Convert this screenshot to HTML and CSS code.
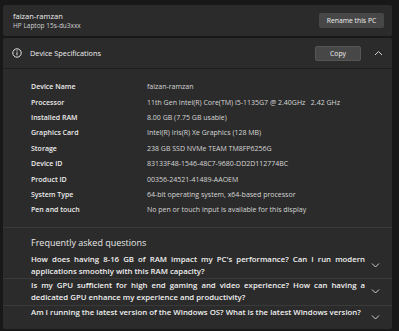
FILE: index.html
```html
<!DOCTYPE html>
<html lang="en">

<head>
    <meta charset="UTF-8">
    <meta name="viewport" content="width=device-width, initial-scale=1.0">
    <title>About</title>
    <link rel="stylesheet" href="styles.css">
</head>

<body>
    <div class="page">
        <div class="card pc-card">
            <div class="pc-info">
                <div class="pc-name">faizan-ramzan</div>
                <div class="pc-model">HP Laptop 15s-du3xxx</div>
            </div>
            <button class="btn btn-rename">Rename this PC</button>
        </div>

        <div class="card spec-card">
            <div class="spec-head">
                <svg class="info-icon" width="10" height="10" viewBox="0 0 10 10">
                    <circle cx="5" cy="5" r="4.2" fill="none" stroke="#e6e6e6" stroke-width="1"/>
                    <line x1="5" y1="4.3" x2="5" y2="7.3" stroke="#e6e6e6" stroke-width="1"/>
                    <circle cx="5" cy="2.9" r="0.6" fill="#e6e6e6"/>
                </svg>
                <span class="spec-title">Device Specifications</span>
                <button class="btn btn-copy">Copy</button>
                <svg class="chev" width="9" height="6" viewBox="0 0 9 6">
                    <polyline points="1,5 4.5,1.5 8,5" fill="none" stroke="#cfcfcf" stroke-width="1"/>
                </svg>
            </div>

            <div class="spec-list">
                <div class="spec-label">Device Name</div>
                <div class="spec-value">faizan-ramzan</div>
                <div class="spec-label">Processor</div>
                <div class="spec-value">11th Gen Intel(R) Core(TM) i5-1135G7 @ 2.40GHz &nbsp; 2.42 GHz</div>
                <div class="spec-label">Installed RAM</div>
                <div class="spec-value">8.00 GB (7.75 GB usable)</div>
                <div class="spec-label">Graphics Card</div>
                <div class="spec-value">Intel(R) Iris(R) Xe Graphics (128 MB)</div>
                <div class="spec-label">Storage</div>
                <div class="spec-value">238 GB SSD NVMe TEAM TM8FP6256G</div>
                <div class="spec-label">Device ID</div>
                <div class="spec-value">83133F48-1546-48C7-9680-DD2D112774BC</div>
                <div class="spec-label">Product ID</div>
                <div class="spec-value">00356-24521-41489-AAOEM</div>
                <div class="spec-label">System Type</div>
                <div class="spec-value">64-bit operating system, x64-based processor</div>
                <div class="spec-label">Pen and touch</div>
                <div class="spec-value">No pen or touch input is available for this display</div>
            </div>

            <div class="faq">
                <div class="faq-title">Frequently asked questions</div>
                <div class="faq-item">
                    <p class="faq-text">How does having 8-16 GB of RAM impact my PC's performance? Can I run modern applications smoothly with this RAM capacity?</p>
                    <svg class="chev" width="9" height="6" viewBox="0 0 9 6">
                        <polyline points="1,1.5 4.5,5 8,1.5" fill="none" stroke="#cfcfcf" stroke-width="1"/>
                    </svg>
                </div>
                <div class="faq-item">
                    <p class="faq-text">Is my GPU sufficient for high end gaming and video experience? How can having a dedicated GPU enhance my experience and productivity?</p>
                    <svg class="chev" width="9" height="6" viewBox="0 0 9 6">
                        <polyline points="1,1.5 4.5,5 8,1.5" fill="none" stroke="#cfcfcf" stroke-width="1"/>
                    </svg>
                </div>
                <div class="faq-item">
                    <p class="faq-text">Am I running the latest version of the Windows OS? What is the latest Windows version?</p>
                    <svg class="chev" width="9" height="6" viewBox="0 0 9 6">
                        <polyline points="1,1.5 4.5,5 8,1.5" fill="none" stroke="#cfcfcf" stroke-width="1"/>
                    </svg>
                </div>
            </div>
        </div>
    </div>
</body>

</html>
```

FILE: styles.css
```css
* {
    margin: 0;
    padding: 0;
    box-sizing: border-box;
}

body,
html {
    width: 100%;
    height: 100%;
    background-color: #181818;
    font-family: "Open Sans", "Noto Sans", sans-serif;
    color: #e6e6e6;
    overflow: hidden;
}

.page {
    display: flex;
    flex-direction: column;
    gap: 2px;
    padding: 5px 7px 0 3px;
}

.card {
    background-color: #2b2b2b;
    border-radius: 2px;
}

.pc-card {
    display: flex;
    align-items: center;
    justify-content: space-between;
    height: 31px;
    padding: 0 8px 0 10px;
}

.pc-name {
    font-size: 7.5px;
    line-height: 10px;
    color: #f0f0f0;
}

.pc-model {
    font-size: 6.5px;
    line-height: 10px;
    color: #d0d0d0;
}

.btn {
    border: none;
    border-radius: 2px;
    background-color: #474747;
    color: #f0f0f0;
    font-family: inherit;
    font-size: 6.8px;
}

.btn-rename {
    width: 65px;
    height: 15px;
}

.spec-card {
    height: 291px;
    display: flex;
    flex-direction: column;
}

.spec-head {
    display: flex;
    align-items: center;
    height: 31px;
    padding: 0 9px 0 9px;
    border-bottom: 1px solid #1e1e1e;
}

.info-icon {
    margin-right: 8px;
}

.spec-title {
    flex: 1;
    font-size: 7.3px;
    color: #f0f0f0;
}

.btn-copy {
    width: 46px;
    height: 15px;
    margin-right: 13px;
    border: 1px solid #555;
}

.spec-list {
    display: grid;
    grid-template-columns: 116px 1fr;
    grid-auto-rows: 15.4px;
    align-items: center;
    padding: 10px 0 9px 28px;
    font-size: 7px;
}

.spec-label {
    font-weight: 600;
    color: #ececec;
}

.spec-value {
    color: #d6d6d6;
}

.faq {
    flex: 1;
    display: flex;
    flex-direction: column;
    border-top: 1px solid #3a3a3a;
}

.faq-title {
    height: 25px;
    padding: 9px 0 0 28px;
    font-size: 9px;
    line-height: 12px;
    color: #e8e8e8;
}

.faq-item {
    display: flex;
    align-items: center;
    padding: 0 8px 1px 28px;
}

.faq-item + .faq-item {
    border-top: 1px solid #3a3a3a;
}

.faq-item:last-child {
    flex: 1;
    align-items: flex-start;
}

.faq-item:last-child .chev {
    align-self: center;
}

.faq-text {
    width: 334px;
    font-size: 7.8px;
    font-weight: 600;
    line-height: 12.3px;
    text-align: justify;
    color: #f0f0f0;
}

.faq-item .chev {
    margin-left: auto;
    margin-right: 4px;
}
```
